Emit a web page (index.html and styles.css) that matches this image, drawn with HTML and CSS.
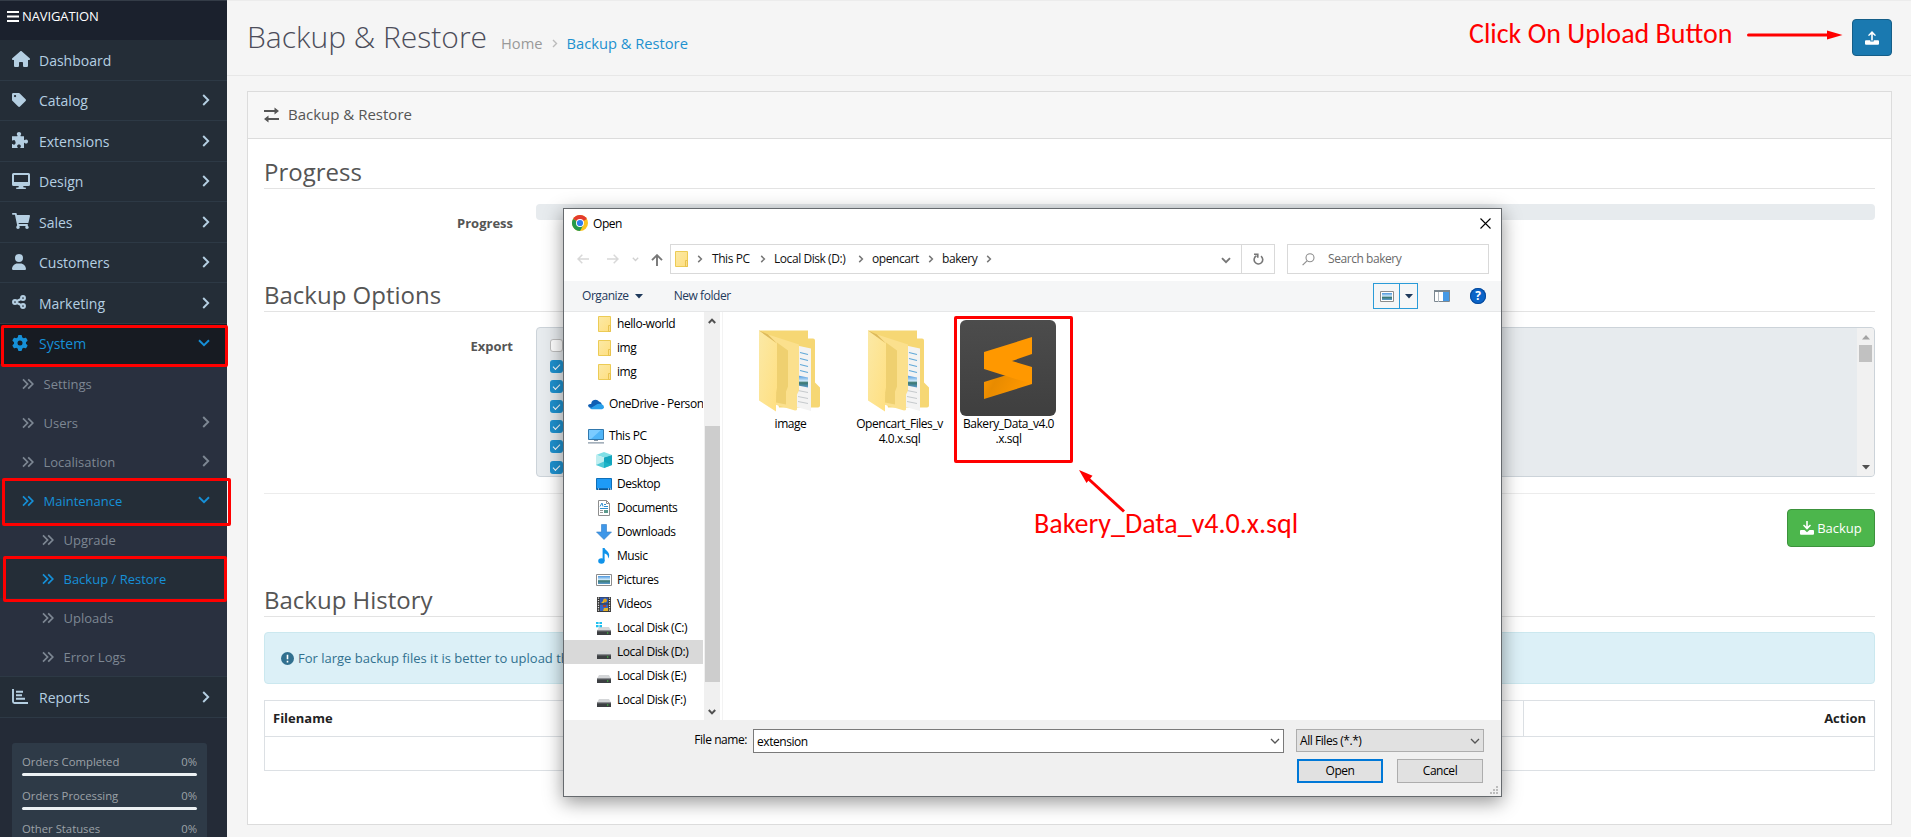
FILE: index.html
```html
<!DOCTYPE html>
<html lang="en">
<head>
<meta charset="utf-8">
<title>Backup &amp; Restore</title>
<link rel="stylesheet" href="styles.css">
</head>
<body>
<svg class="defs" width="0" height="0">
  <defs>
    <linearGradient id="gFold" x1="0" y1="0" x2="1" y2="1"><stop offset="0" stop-color="#fbe9a6"/><stop offset="1" stop-color="#ffdf80"/></linearGradient>
    <linearGradient id="gSub" x1="0" y1="0" x2="0" y2="1"><stop offset="0" stop-color="#4c4c4c"/><stop offset="1" stop-color="#3f3f3f"/></linearGradient>
    <linearGradient id="gPic" x1="0" y1="0" x2="0" y2="1"><stop offset="0" stop-color="#4a95dc"/><stop offset=".45" stop-color="#cfe9fa"/><stop offset=".6" stop-color="#38766c"/><stop offset="1" stop-color="#5b9bd0"/></linearGradient>
    <linearGradient id="gShade" x1="0" y1="0" x2="1" y2=".35"><stop offset="0" stop-color="#ff9800"/><stop offset=".35" stop-color="#e88b00"/><stop offset="1" stop-color="#ff9800"/></linearGradient>
  </defs>
  <symbol id="dbl" viewBox="0 0 12 12"><path d="M1 1.3 5.6 6 1 10.7M6.2 1.3 10.8 6 6.2 10.7" fill="none" stroke="currentColor" stroke-width="1.7"/></symbol>
  <symbol id="right" viewBox="0 0 8 12"><path d="M1.2 1 6.2 6l-5 5" fill="none" stroke="currentColor" stroke-width="1.9"/></symbol>
  <symbol id="down" viewBox="0 0 12 8"><path d="M1 1.3 6 6.2l5-4.9" fill="none" stroke="currentColor" stroke-width="1.9"/></symbol>
  <symbol id="crumb" viewBox="0 0 6 8"><path d="M1.2.9 4.400 4 1.200 7.100" fill="none" stroke="currentColor" stroke-width="1.5"/></symbol>
  <symbol id="thin" viewBox="0 0 10 6"><path d="M1 1l4 4 4-4" fill="none" stroke="currentColor" stroke-width="1.3"/></symbol>
  <symbol id="sfold" viewBox="0 0 14 16"><path d="M.5.5h12v15H.5z" fill="url(#gFold)" stroke="#eccb55"/><path d="M10.500 9.500h2v6h-2z" fill="#fbe08a" stroke="#e6c04a" stroke-width=".9"/></symbol>
  <symbol id="drive" viewBox="0 0 16 16"><path d="M3 7h10l2 3.600H1z" fill="#d4d6d8"/><path d="M1 10.500h14V15H1z" fill="#3c3f42"/><path d="M1 10.500h14v.8H1z" fill="#85898c"/><path d="M11 12.400h1.300v1.200H11z" fill="#3fe53f"/></symbol>
  <symbol id="bigfold" viewBox="0 0 61 81">
    <path d="M0 0h49v8h5q2 0 2 2v42l5 5v18q0 2-2 2H20z" fill="#f6d774"/>
    <path d="M38 15l14 3v62.500L36 76z" fill="#f3f3f3"/>
    <path d="M41 22l8 2m-8 4l8 2m-8 4l8 2m-8 4l8 2" stroke="#5fa8d8" stroke-width="1.100"/>
    <path d="M39 45l10 2v10l-10-2z" fill="url(#gPic)"/>
    <path d="M39 60l10 2m-10 4l10 2m-10 3l10 2" stroke="#c5c9cc"/>
    <path d="M9 4l31 10v46l-2 4v15q0 1-2 1L9 72z" fill="#fbe08d"/>
    <path d="M18 12l11 8v36l-2 5v13l-10-2z" fill="#efd070"/>
    <path d="M0 0l18 13v44l-1 5v19L0 70z" fill="url(#gFold)"/>
    <path d="M0 0l9 4 9 9z" fill="#dcb95c"/>
  </symbol>
</svg>

<div class="page">
  <nav class="side">
    <div class="side-title"><svg width="12" height="11" viewBox="0 0 12 11"><path d="M0 1h12M0 5.500h12M0 10h12" stroke="#fff" stroke-width="1.800"/></svg><span>NAVIGATION</span></div>
    <div class="item"><svg class="ic" width="18" height="16" viewBox="0 0 576 512"><path fill="currentColor" d="M575.800 255.500c0 18-15 32.100-32 32.100h-32l.7 160.200c0 2.700-.2 5.400-.5 8.100V472c0 22.100-17.900 40-40 40H392c-22.100 0-40-17.900-40-40V384c0-17.700-14.300-32-32-32H256c-17.700 0-32 14.300-32 32v88c0 22.100-17.900 40-40 40H104c-22.100 0-40-17.900-40-40V287.600H32c-18 0-32-14-32-32.100c0-9 3-17 10-24L266.400 8c7-7 15-8 22-8s15 2 21 7L564.800 231.500c8 7 12 15 11 24z"/></svg><span>Dashboard</span></div>
    <div class="item"><svg class="ic" width="14" height="14" viewBox="0 0 512 512"><path fill="currentColor" fill-rule="evenodd" d="M0 252.118V48C0 21.490 21.490 0 48 0h204.118a48 48 0 0 1 33.941 14.059l211.882 211.882c18.744 18.745 18.744 49.137 0 67.882L293.823 497.941c-18.745 18.744-49.137 18.744-67.882 0L14.059 286.059A48 48 0 0 1 0 252.118zM112 72c-22 0-40 18-40 40s18 40 40 40 40-18 40-40-18-40-40-40z"/></svg><span>Catalog</span><svg class="arr" width="8" height="12"><use href="#right"/></svg></div>
    <div class="item"><svg class="ic" width="16" height="16" viewBox="0 0 16 16"><path fill="currentColor" d="M0 4.200h5.200c.3 0 .4-.3.3-.6C5 3 4.800 2.400 4.800 2 4.800.8 5.800 0 7 0s2.200.8 2.200 2c0 .5-.3 1-.7 1.600-.2.3 0 .6.3.6H12v3.600c0 .3.3.5.6.3.5-.4 1-.7 1.600-.7 1.100 0 1.800.9 1.800 2.100s-.7 2.100-1.800 2.100c-.6 0-1.100-.3-1.600-.7-.3-.2-.6 0-.6.3V16H8.600c-.4 0-.5-.3-.3-.6.4-.4.6-.8.6-1.300 0-1-.9-1.600-1.900-1.600s-1.900.6-1.900 1.600c0 .5.2.9.6 1.300.2.3.1.6-.3.6H0v-3.600c0-.3.3-.5.6-.3.4.4.9.6 1.400.6 1 0 1.600-.9 1.600-1.900S3 7.900 2 7.900c-.5 0-1 .2-1.400.6-.3.2-.6 0-.6-.3z"/></svg><span>Extensions</span><svg class="arr" width="8" height="12"><use href="#right"/></svg></div>
    <div class="item"><svg class="ic" width="18" height="16" viewBox="0 0 18 16"><path fill="currentColor" fill-rule="evenodd" d="M1.500 0h15A1.500 1.500 0 0 1 18 1.500v10a1.500 1.500 0 0 1-1.500 1.500h-5.300l.4 1.500h1.600q.8 0 .8.800t-.8.700H4.800q-.8 0-.8-.7t.8-.8h1.600l.4-1.500H1.500A1.500 1.500 0 0 1 0 11.500v-10A1.500 1.500 0 0 1 1.500 0zM2 2v7h14V2z"/></svg><span>Design</span><svg class="arr" width="8" height="12"><use href="#right"/></svg></div>
    <div class="item"><svg class="ic" width="18" height="16" viewBox="0 0 576 512"><path fill="currentColor" d="M528.120 301.319l47.273-208C578.806 78.301 567.391 64 551.990 64H159.208l-9.166-44.810C147.758 8.021 137.930 0 126.529 0H24C10.745 0 0 10.745 0 24v4c0 13.255 10.745 24 24 24h69.883l70.248 343.435C150 412 136 435.222 136 456c0 30.928 25.072 56 56 56s56-25.072 56-56c0-15.674-6.447-29.835-16.824-40h209.647C430.447 426.165 424 440.326 424 456c0 30.928 25.072 56 56 56s56-25.072 56-56c0-22.172-12.888-41.332-31.579-50.405l5.517-24.276c3.413-15.018-8.002-29.319-23.403-29.319H218.117l-6.545-32h293.145c11.206 0 20.920-7.754 23.403-18.681z"/></svg><span>Sales</span><svg class="arr" width="8" height="12"><use href="#right"/></svg></div>
    <div class="item"><svg class="ic" width="14" height="16" viewBox="0 0 448 512"><path fill="currentColor" d="M224 256A128 128 0 1 0 224 0a128 128 0 1 0 0 256zm-45.700 48C79.800 304 0 383.800 0 482.300C0 498.700 13.300 512 29.700 512H418.300c16.400 0 29.700-13.300 29.700-29.700C448 383.800 368.200 304 269.700 304H178.300z"/></svg><span>Customers</span><svg class="arr" width="8" height="12"><use href="#right"/></svg></div>
    <div class="item"><svg class="ic" width="14" height="14" viewBox="0 0 14 14"><g fill="none" stroke="currentColor" stroke-width="2.100"><circle cx="3" cy="7" r="1.900"/><circle cx="11" cy="3" r="1.900"/><circle cx="11" cy="11" r="1.900"/><path d="M5 6l4-2M5 8l4 2"/></g></svg><span>Marketing</span><svg class="arr" width="8" height="12"><use href="#right"/></svg></div>
    <div class="item open"><svg class="ic" width="16" height="16" viewBox="0 0 512 512"><path fill="currentColor" fill-rule="evenodd" d="M495.900 166.600c3.200 8.700 .5 18.400-6.400 24.600l-43.300 39.400c1.100 8.300 1.700 16.800 1.700 25.400s-.6 17.100-1.700 25.400l43.300 39.400c6.900 6.200 9.600 15.900 6.400 24.600c-4.400 11.900-9.700 23.300-15.800 34.300l-4.700 8.100c-6.600 11-14 21.400-22.100 31.200c-5.900 7.200-15.700 9.600-24.500 6.800l-55.700-17.700c-13.400 10.300-28.200 18.900-44 25.400l-12.500 57.100c-2 9.100-9 16.300-18.200 17.800c-13.800 2.300-28 3.500-42.500 3.500s-28.700-1.200-42.500-3.500c-9.200-1.500-16.200-8.700-18.200-17.800l-12.500-57.100c-15.800-6.500-30.600-15.100-44-25.400L83.100 425.900c-8.800 2.800-18.600 .3-24.500-6.800c-8.100-9.800-15.500-20.200-22.100-31.200l-4.700-8.100c-6.100-11-11.400-22.400-15.800-34.300c-3.200-8.700-.5-18.400 6.400-24.600l43.300-39.400C64.600 273.100 64 264.600 64 256s.6-17.100 1.700-25.400L22.400 191.200c-6.900-6.200-9.600-15.900-6.400-24.600c4.400-11.900 9.700-23.300 15.800-34.300l4.700-8.100c6.600-11 14-21.400 22.100-31.200c5.900-7.200 15.700-9.600 24.500-6.800l55.700 17.700c13.400-10.300 28.200-18.900 44-25.400l12.500-57.100c2-9.100 9-16.300 18.200-17.800C227.300 1.200 241.500 0 256 0s28.700 1.200 42.500 3.500c9.200 1.500 16.200 8.700 18.200 17.800l12.500 57.100c15.800 6.500 30.600 15.100 44 25.400l55.700-17.700c8.800-2.800 18.600-.3 24.500 6.800c8.100 9.800 15.500 20.200 22.100 31.200l4.700 8.100c6.100 11 11.400 22.400 15.800 34.300zM256 336a80 80 0 1 0 0-160 80 80 0 1 0 0 160z"/></svg><span>System</span><svg class="arr" width="12" height="8"><use href="#down"/></svg></div>
    <div class="sub"><svg width="12" height="12"><use href="#dbl"/></svg><span>Settings</span></div>
    <div class="sub"><svg width="12" height="12"><use href="#dbl"/></svg><span>Users</span><svg class="arr" width="8" height="12"><use href="#right"/></svg></div>
    <div class="sub"><svg width="12" height="12"><use href="#dbl"/></svg><span>Localisation</span><svg class="arr" width="8" height="12"><use href="#right"/></svg></div>
    <div class="sub active"><svg width="12" height="12"><use href="#dbl"/></svg><span>Maintenance</span><svg class="arr" width="12" height="8"><use href="#down"/></svg></div>
    <div class="sub deep"><svg width="12" height="12"><use href="#dbl"/></svg><span>Upgrade</span></div>
    <div class="sub deep active"><svg width="12" height="12"><use href="#dbl"/></svg><span>Backup / Restore</span></div>
    <div class="sub deep"><svg width="12" height="12"><use href="#dbl"/></svg><span>Uploads</span></div>
    <div class="sub deep"><svg width="12" height="12"><use href="#dbl"/></svg><span>Error Logs</span></div>
    <div class="item last"><svg class="ic" width="16" height="15" viewBox="0 0 16 15"><path d="M1 0v12.500Q1 14 2.500 14H16M4 2.800h7M4 6.300h6M4 9.800h9" fill="none" stroke="currentColor" stroke-width="1.900"/></svg><span>Reports</span><svg class="arr" width="8" height="12"><use href="#right"/></svg></div>
    <div class="stats">
      <div class="stat"><div><span>Orders Completed</span><span>0%</span></div><i></i></div>
      <div class="stat"><div><span>Orders Processing</span><span>0%</span></div><i></i></div>
      <div class="stat"><div><span>Other Statuses</span><span>0%</span></div><i></i></div>
    </div>
  </nav>

  <main class="main">
    <header class="head">
      <h1>Backup &amp; Restore</h1>
      <div class="crumbs"><span>Home</span><svg width="6" height="9" viewBox="0 0 6 9"><path d="M1 1l3.500 3.500L1 8" fill="none" stroke="#bbb" stroke-width="1.400"/></svg><a>Backup &amp; Restore</a></div>
      <div class="upload"><svg width="14" height="14" viewBox="0 0 14 14"><path fill="#fff" d="M7 0l4 4.200-1 .9-2.200-1.900V9.500H6.200V3.200L4 5.100l-1-.9zM1 9.300h4.300v1.200h3.400V9.300H13q1 0 1 1v2.500q0 1-1 1H1q-1 0-1-1v-2.500q0-1 1-1z"/></svg></div>
    </header>
    <section class="panel">
      <div class="panel-head"><svg width="15" height="16" viewBox="0 0 15 16"><path d="M0 4h11M15 12H4" stroke="#555" stroke-width="2"/><path d="M10.500.6 15 4l-4.500 3.400zM4.500 8.600 0 12l4.500 3.400z" fill="#555"/></svg><span>Backup &amp; Restore</span></div>
      <div class="panel-body">
        <h2>Progress</h2>
        <div class="row r1"><label>Progress</label><div class="bar"></div></div>
        <h2>Backup Options</h2>
        <div class="row r2"><label>Export</label>
          <div class="well">
            <div class="checks"><b class="off"></b><b></b><b></b><b></b><b></b><b></b><b></b></div>
            <div class="scroll"><svg width="8" height="5"><path d="M4 0l4 4.500H0z" fill="#a3a3a3"/></svg><i></i><svg class="dn" width="8" height="5"><path d="M0 0h8L4 4.500z" fill="#505050"/></svg></div>
          </div>
        </div>
        <div class="foot"><div class="backup"><svg width="14" height="14" viewBox="0 0 14 14"><path fill="#fff" d="M6.200 0h1.600v5.500L10 3.500l1 1L7 8.800 3 4.500l1-1 2.200 2zM1 9h3.500L7 11.300 9.500 9H13q1 0 1 1v2.800q0 1-1 1H1q-1 0-1-1V10q0-1 1-1z"/></svg><span>Backup</span></div></div>
        <h2>Backup History</h2>
        <div class="alert"><svg width="13" height="13" viewBox="0 0 13 13"><circle cx="6.500" cy="6.500" r="6.500" fill="#31708f"/><path d="M6.500 2.800v4.400M6.500 8.800v1.600" stroke="#fff" stroke-width="1.600"/></svg><span>For large backup files it is better to upload the</span></div>
        <div class="table"><div class="th">Filename</div><div class="th end">Action</div><div class="td"></div></div>
      </div>
    </section>
  </main>
</div>

<div class="dialog">
  <div class="d-title">
    <svg width="16" height="16" viewBox="0 0 16 16"><circle cx="8" cy="8" r="8" fill="#fcc31e"/><path d="M8 8 1.100 4A8 8 0 0 1 14.900 4z" fill="#e33b2e"/><path d="M8 8 1.070 4A8 8 0 0 0 8 16l3.400-6z" fill="#269a4c"/><circle cx="8" cy="8" r="4" fill="#fff"/><circle cx="8" cy="8" r="3.100" fill="#2f7df0"/></svg>
    <span>Open</span>
    <svg class="close" width="11" height="11" viewBox="0 0 11 11"><path d="M.5.5l10 10M10.500.5l-10 10" stroke="#000" stroke-width="1.100"/></svg>
  </div>
  <div class="d-addr">
    <div class="navs">
      <svg width="12" height="10" viewBox="0 0 12 10"><path d="M12 5H1M5.300.8 1 5l4.300 4.200" fill="none" stroke="#d8d8d8" stroke-width="1.500"/></svg>
      <svg width="12" height="10" viewBox="0 0 12 10"><path d="M0 5h11M6.700.8 11 5 6.700 9.200" fill="none" stroke="#d8d8d8" stroke-width="1.500"/></svg>
      <svg class="mini" width="7" height="5" viewBox="0 0 7 5"><path d="M.8.8l2.700 2.700L6.200.8" fill="none" stroke="#d0d0d0" stroke-width="1.300"/></svg>
      <svg class="up" width="12" height="12" viewBox="0 0 12 12"><path d="M6 12V1.500M1 6.200l5-5 5 5" fill="none" stroke="#777" stroke-width="1.900"/></svg>
    </div>
    <div class="path">
      <svg width="14" height="16"><use href="#sfold"/></svg>
      <svg class="c c0" width="6" height="8"><use href="#crumb"/></svg><span class="w38">This PC</span>
      <svg class="c" width="6" height="8"><use href="#crumb"/></svg><span class="w75">Local Disk (D:)</span>
      <svg class="c" width="6" height="8"><use href="#crumb"/></svg><span class="w47">opencart</span>
      <svg class="c" width="6" height="8"><use href="#crumb"/></svg><span class="w35">bakery</span>
      <svg class="c" width="6" height="8"><use href="#crumb"/></svg>
      <svg class="pd" width="10" height="7" viewBox="0 0 10 7"><path d="M1 1.200l4 4 4-4" fill="none" stroke="#777" stroke-width="1.900"/></svg>
      <div class="reload"><svg width="11" height="12" viewBox="0 0 11 12"><path d="M3.500 2.800A4.300 4.300 0 1 0 8 3.200M1 1.200h3.800v3.600" fill="none" stroke="#777" stroke-width="1.600"/></svg></div>
    </div>
    <div class="search"><svg width="13" height="13" viewBox="0 0 13 13"><circle cx="8" cy="4.800" r="4" fill="none" stroke="#8f8f8f" stroke-width="1.100"/><path d="M5 7.800.6 12.200" stroke="#8f8f8f" stroke-width="1.200"/></svg><span>Search bakery</span></div>
  </div>
  <div class="d-tools">
    <span>Organize</span><svg class="tri" width="8" height="5"><path d="M0 0h8L4 4.500z" fill="#1e395b"/></svg><span class="newf">New folder</span>
    <div class="view"><div class="v1"><svg width="14" height="11" viewBox="0 0 14 11"><path d="M.5.5h13v10H.5z" fill="#fff" stroke="#8c8c8c"/><path d="M2 2h10v7H2z" fill="url(#gPic)"/></svg></div><div class="v2"><svg width="8" height="5"><path d="M0 0h8L4 4.500z" fill="#1e395b"/></svg></div></div>
    <svg class="pane" width="16" height="12" viewBox="0 0 16 12"><path d="M.5.5h15v11H.5z" fill="#fff" stroke="#7b8790"/><path d="M0 0h16v2H0z" fill="#7b8790"/><path d="M4.500 2v10" stroke="#b5bcc2"/><path d="M9 2h6v9H9z" fill="#4599e6"/></svg>
    <div class="help">?</div>
  </div>
  <div class="d-body">
    <div class="tree">
      <div class="t fo"><svg width="14" height="16"><use href="#sfold"/></svg><span>hello-world</span></div>
      <div class="t fo"><svg width="14" height="16"><use href="#sfold"/></svg><span>img</span></div>
      <div class="t fo"><svg width="14" height="16"><use href="#sfold"/></svg><span>img</span></div>
      <div class="t top gap"><svg width="16" height="16" viewBox="0 0 16 16"><path d="M3.200 8A4.300 4.300 0 0 1 11 5.500 4.500 4.500 0 0 1 14 8.500L9 12H3Q.2 11.500 0 9.500.3 7.500 3.200 8z" fill="#0f5fb4"/><path d="M2 12.500 9.500 8q4-1 6 1.500 1.300 3-1.500 3.800H4q-1.500 0-2-.8z" fill="#2aa0ea"/></svg><span>OneDrive - Person</span></div>
      <div class="t top gap"><svg width="16" height="16" viewBox="0 0 16 16"><path d="M.5 1.500h15v10H.5z" fill="#4fb4f7" stroke="#3178ad"/><path d="M1 2h12L3 11H1z" fill="#7bcbff"/><path d="M6 12h4v1H6zM0 14.300h16v1.200H0z" fill="#8796a5"/></svg><span>This PC</span></div>
      <div class="t"><svg width="16" height="16" viewBox="0 0 16 16"><path d="M0 3 8 0l8 3-8 2.500z" fill="#7fdfe6"/><path d="M0 3l8 2.500V16l-8-3z" fill="#bfeef0"/><path d="M16 3 8 5.500V16l8-3z" fill="#12a5bd"/><path d="M0 13l8-3.500L16 13l-8 3z" fill="#1fb9cc" opacity=".7"/></svg><span>3D Objects</span></div>
      <div class="t"><svg width="16" height="16" viewBox="0 0 16 16"><path d="M.5 2.500h15v11H.5z" fill="#1e9bf7" stroke="#0f6fb8"/><path d="M1 13h14" stroke="#0b4a80" stroke-width="1.200"/><path d="M2 13h1m9 0h1m1 0h1" stroke="#fff"/></svg><span>Desktop</span></div>
      <div class="t"><svg width="16" height="16" viewBox="0 0 16 16"><path d="M2.500.5h8l3 3v12h-11z" fill="#fff" stroke="#8e8e8e"/><path d="M10.500.5v3h3" fill="none" stroke="#8e8e8e"/><path d="M4 6.500 6 3l1 3.500M8 4.500h2M4 8.500h8M8 6.500h4" stroke="#2e8fd0" fill="none"/><path d="M4 10.500h3m-3 2h3" stroke="#999"/><path d="M8 10h4v3H8z" fill="#5c9a8c"/></svg><span>Documents</span></div>
      <div class="t"><svg width="16" height="16" viewBox="0 0 16 16"><path d="M5.500.5h5v7.500h5L8 15.500.5 8h5z" fill="#3f97e8" stroke="#2f7cc8" stroke-width=".6"/></svg><span>Downloads</span></div>
      <div class="t"><svg width="16" height="16" viewBox="0 0 16 16"><ellipse cx="5.400" cy="13" rx="3.200" ry="2.800" fill="#1093ea"/><path d="M6.600 0h2c.3 2.300 4.800 3.300 4.600 7.500-.1 1.400-.6 2.300-1.200 3 .4-3.200-1.200-4.300-3.400-5V13h-2z" fill="#1093ea"/></svg><span>Music</span></div>
      <div class="t"><svg width="16" height="16" viewBox="0 0 16 16"><path d="M.5 2.500h15v11H.5z" fill="#fff" stroke="#8c8c8c"/><path d="M2 4h12v8H2z" fill="url(#gPic)"/></svg><span>Pictures</span></div>
      <div class="t"><svg width="16" height="16" viewBox="0 0 16 16"><path d="M1 1h14v15H1z" fill="#3b3b3b"/><path d="M2.500 1.500v14M13.500 1.500v14" stroke="#e4e4e4" stroke-width="1.200" stroke-dasharray="1.200 1.200"/><path d="M4 1.500h8v6H4z" fill="#2b59b8"/><path d="M4 8.500h8v6.500H4z" fill="#3566c4"/><circle cx="9" cy="4.500" r="2" fill="#e0a21e"/><path d="M5 7l3-3v3zM8 12h4v3H7z" fill="#e2b02b"/><path d="M7 9h3v2H7z" fill="#b0402a"/></svg><span>Videos</span></div>
      <div class="t"><svg width="16" height="16" viewBox="0 0 16 16"><use href="#drive"/><path d="M0 2h2.600v2H0zm3.400 0H6v2H3.400zM0 5h2.600v2.200H0zm3.400 0H6v2.200H3.400z" fill="#1fc0ef"/></svg><span>Local Disk (C:)</span></div>
      <div class="t sel"><svg width="16" height="16"><use href="#drive"/></svg><span>Local Disk (D:)</span></div>
      <div class="t"><svg width="16" height="16"><use href="#drive"/></svg><span>Local Disk (E:)</span></div>
      <div class="t"><svg width="16" height="16"><use href="#drive"/></svg><span>Local Disk (F:)</span></div>
    </div>
    <div class="tscroll"><svg width="8" height="6" viewBox="0 0 8 6"><path d="M.8 5 4 1.600 7.200 5" fill="none" stroke="#505050" stroke-width="2"/></svg><i></i><svg class="dn" width="8" height="6" viewBox="0 0 8 6"><path d="M.8 1 4 4.400 7.200 1" fill="none" stroke="#505050" stroke-width="2"/></svg></div>
    <div class="files">
      <div class="file"><svg width="61" height="82"><use href="#bigfold"/></svg><p>image</p></div>
      <div class="file"><svg width="61" height="82"><use href="#bigfold"/></svg><p>Opencart_Files_v<br>4.0.x.sql</p></div>
      <div class="file subl"><svg width="96" height="96" viewBox="0 0 96 96"><rect width="96" height="96" rx="6" fill="url(#gSub)"/><path d="M24 62 72 47v17L24 79z" fill="url(#gShade)"/><path d="M24 32 72 17v17L52 41l20 6v17L24 49z" fill="#ff9800"/></svg><p>Bakery_Data_v4.0<br>.x.sql</p></div>
    </div>
  </div>
  <div class="d-foot">
    <div class="frow"><span class="fl">File name:</span><div class="inp"><span>extension</span><svg width="10" height="6"><use href="#thin"/></svg></div><div class="selc"><span>All Files (*.*)</span><svg width="10" height="6"><use href="#thin"/></svg></div></div>
    <div class="brow"><div class="btn prim">Open</div><div class="btn">Cancel</div></div>
    <svg class="grip" width="8" height="8"><path d="M6 0h2v2H6zM3 3h2v2H3zM6 3h2v2H6zM0 6h2v2H0zM3 6h2v2H3zM6 6h2v2H6z" fill="#bcbcbc"/></svg>
  </div>
</div>

<div class="mark m-system"></div>
<div class="mark m-maint"></div>
<div class="mark m-backup"></div>
<div class="mark m-file"></div>
<div class="note n-upload">Click On Upload Button</div>
<div class="note n-file">Bakery_Data_v4.0.x.sql</div>
<svg class="arrow a-upload" width="96" height="10"><path d="M1.500 5H82" stroke="#f00" stroke-width="3" stroke-linecap="round"/><path d="M95.500 5 80 9.500v-9z" fill="#f00"/></svg>
<svg class="arrow a-file" width="48" height="44"><path d="M45 41.500 8 7.500" stroke="#f00" stroke-width="3"/><path d="M0 0 13.500 5.800 7.500 13z" fill="#f00"/></svg>
</body>
</html>
```
FILE: styles.css
```css
* { box-sizing: border-box; }
body { margin: 0; width: 1911px; height: 837px; overflow: hidden; position: relative; background: #f5f5f5; font-family: "Open Sans", sans-serif; color: #555; }
svg { display: block; flex: none; }
.defs { position: absolute; }
h1, h2, p { margin: 0; font-weight: 400; }
.page { display: flex; height: 837px; overflow: hidden; }

/* Sidebar */
.side { width: 227px; flex: none; background: #242b37; border-top: 1px solid #343c47; }
.side-title { height: 39px; background: #1b212d; color: #fff; font-size: 13px; line-height: 18px; display: flex; align-items: flex-start; gap: 3px; padding: 6px 0 0 7px; letter-spacing: -.1px; }
.side-title svg { margin-top: 4px; }
.item { height: 40.5px; background: #242d37; border-bottom: 1px solid #2d3945; display: grid; grid-template-columns: 27px 1fr auto; align-items: center; color: #b5cfe2; font-size: 14px; padding: 1px 17px 0 12px; }
.ic { margin-bottom: 2px; }
.arr { margin-bottom: 1px; }
.open { background: #171b22; color: #1690d8; border-color: #171b22; }
.sub { height: 39px; background: #29303f; color: #7d8793; font-size: 13px; display: grid; grid-template-columns: 21.5px 1fr auto; align-items: center; padding: 0 17px 0 22px; }
.deep { padding-left: 42px; }
.active { background: #242d37; color: #1690d8; }
.last { border-top: 1px solid #2d3945; height: 42px; }
.stats { margin: 25px 20px 0 12px; height: 110px; border-radius: 3px; background: #2e3a47; padding: 10px 10px 0; }
.stat { height: 33.5px; font-size: 11.3px; line-height: 17px; color: #9da2a8; }
.stat div { display: flex; justify-content: space-between; }
.stat i { display: block; height: 3px; margin-top: 3px; border-radius: 2px; background: #edf1f4; }

/* Main */
.main { flex: 1; border-top: 1px solid #ececec; }
.head { height: 75px; border-bottom: 1px solid #e7e7e7; display: flex; align-items: flex-start; padding: 0 19px 0 20px; }
h1 { font-size: 30px; font-weight: 300; color: #4c4d5a; line-height: 40px; margin-top: 16px; width: 254px; white-space: nowrap; }
.crumbs { display: flex; align-items: center; gap: 9px; font-size: 14.7px; line-height: 20px; margin-top: 32px; color: #999; }
.crumbs a { color: #1e91cf; }
.upload { margin: 18px 0 0 auto; width: 40px; height: 37px; border: 1px solid #155e88; border-radius: 4px; background: #1a79b0; display: flex; align-items: center; justify-content: center; }
.panel { margin: 15px 19px 0 20px; height: 734px; border: 1px solid #dcdcdc; background: #fff; }
.panel-head { height: 47px; background: #f7f7f7; border-bottom: 1px solid #dcdcdc; display: flex; align-items: center; gap: 9px; padding-left: 16px; font-size: 15px; }
.panel-head span { padding-bottom: 2px; }
.panel-body { padding: 16px; }
h2 { font-size: 24px; line-height: 34px; height: 34px; border-bottom: 1px solid #e3e3e3; }
.row { display: grid; grid-template-columns: 249px 1fr; column-gap: 23px; padding-top: 15px; font-size: 13px; }
.row label { text-align: right; font-weight: 700; line-height: 18px; padding-top: 10px; }
.r1 { height: 89px; }
.bar { height: 16px; border-radius: 4px; background: #e7ebee; }
.r2 { height: 182px; border-bottom: 1px solid #ececec; }
.well { height: 150px; border: 1px solid #ccd3d9; border-radius: 4px; background: #e7ebee; display: flex; justify-content: space-between; overflow: hidden; padding-left: 13px; }
.checks { display: flex; flex-direction: column; gap: 7px; padding-top: 11px; }
.checks b { width: 13px; height: 13px; flex: none; border-radius: 3px; background: #1e91cf; display: flex; align-items: center; justify-content: center; }
.checks b::after { content: ""; width: 6px; height: 3px; border: solid #fff; border-width: 0 0 1.5px 1.5px; transform: translateY(-1px) rotate(-45deg); }
.checks .off { background: #fff; border: 1px solid #bfbfbf; margin-bottom: 1px; }
.checks .off::after { display: none; }
.checks b:last-child { margin-top: 1px; }
.scroll { width: 17px; background: #f1f1f1; display: flex; flex-direction: column; align-items: center; padding: 7px 0 6px; }
.scroll i { width: 13px; height: 17px; background: #c1c1c1; margin-top: 5px; }
.dn { margin-top: auto; }
.foot { height: 89px; display: flex; justify-content: flex-end; padding-top: 15px; }
.backup { width: 88px; height: 38px; background: #4cb64c; border: 1px solid #3c923c; border-radius: 4px; color: #fff; font-size: 13px; display: flex; align-items: center; justify-content: center; gap: 3px; }
.alert { margin-top: 15px; height: 52px; border: 1px solid #cbe8ef; border-radius: 4px; background: #dcf0f7; color: #31708f; font-size: 13px; display: flex; align-items: center; gap: 4px; padding-left: 16px; white-space: nowrap; }
.table { margin-top: 16px; display: grid; grid-template-columns: 1259px 1fr; border: 1px solid #dce0e4; height: 71px; grid-template-rows: 36px 1fr; }
.th { font-size: 13px; font-weight: 700; color: #222; padding: 0 8px; line-height: 34px; border-bottom: 1px solid #dce0e4; border-right: 1px solid #dce0e4; }
.end { text-align: right; border-right: 0; }
.td { grid-column: 1 / 3; }

/* File dialog */
.dialog { position: absolute; left: 563px; top: 208px; width: 939px; height: 589px; background: #fff; border: 1px solid #666a6e; box-shadow: 0 5px 18px rgba(0,0,0,.42); color: #000; font-size: 12px; letter-spacing: -.44px; display: flex; flex-direction: column; }
.dialog span, .dialog p { white-space: nowrap; }
.d-title { height: 35px; display: flex; align-items: flex-start; padding: 6px 10px 0 8px; gap: 5px; line-height: 17px; }
.close { margin: 3px 0 0 auto; }
.d-addr { height: 37px; display: flex; }
.navs { width: 106px; display: flex; align-items: center; gap: 18px; height: 30px; padding-left: 13px; }
.mini { margin: 0 -7px 0 -5px; }
.up { margin: 2px 0 0 1px; }
.path { width: 605px; height: 30px; border: 1px solid #d9d9d9; display: flex; align-items: center; padding-left: 4px; color: #111; }
.path span, .search span, .d-tools span, .t span { padding-bottom: 2px; }
.c { color: #777; margin: 0 8.5px; }
.c0 { margin: 0 9px 0 8px; }
.w38 { width: 39px; }
.w75 { width: 75px; }
.w47 { width: 47px; }
.w35 { width: 35px; }
.pd { margin: 2px 10px 0 auto; }
.reload { width: 33px; height: 28px; border-left: 1px solid #d9d9d9; display: flex; align-items: center; justify-content: center; }
.search { margin-left: 12px; width: 202px; height: 30px; border: 1px solid #d9d9d9; display: flex; align-items: center; gap: 13px; padding-left: 14px; color: #6a6a6a; }
.d-tools { height: 31px; background: #f5f6f7; border-bottom: 1px solid #e6e7e8; display: flex; align-items: center; padding: 0 15px 0 18px; color: #1e395b; }
.tri { margin-left: 6px; }
.newf { margin-left: 31px; }
.view { margin-left: auto; display: flex; width: 45px; height: 26px; border: 1px solid #2a9bd8; }
.v1, .v2 { display: flex; align-items: center; justify-content: center; }
.v1 { width: 26px; border-right: 1px solid #2a9bd8; }
.v2 { flex: 1; }
.pane { margin: 0 20px 0 16px; }
.help { width: 16px; height: 16px; border-radius: 50%; background: #0a64c8; box-shadow: inset 0 0 0 1px #08499a; color: #fff; font-weight: 700; text-align: center; line-height: 16px; font-size: 12px; }
.d-body { height: 408px; display: flex; }
.tree { width: 139px; overflow: hidden; }
.t { height: 24px; display: flex; align-items: center; padding-left: 32px; gap: 5px; }
.fo { padding-left: 34px; }
.top { padding-left: 24px; }
.gap { margin-top: 8px; }
.sel { background: #d9d9d9; }
.tscroll { width: 16px; margin-left: 1px; background: #f0f0f0; display: flex; flex-direction: column; align-items: center; padding: 6px 0 5px; }
.tscroll i { width: 15px; height: 256px; background: #cdcdcd; margin-top: 102px; }
.files { flex: 1; margin-left: 2px; border-left: 1px solid #f3f3f3; display: flex; padding-left: 13px; }
.file { width: 109px; display: flex; flex-direction: column; align-items: center; padding-top: 18px; text-align: center; line-height: 15px; }
.file svg { margin-right: 2px; }
.file p { margin-top: 4px; }
.subl { padding-top: 8px; }
.subl p { margin-top: 0; }
.d-foot { flex: 1; background: #f0f0f0; position: relative; padding-top: 9px; }
.frow { display: flex; }
.fl { width: 183px; text-align: right; line-height: 22px; }
.inp { margin-left: 6px; width: 531px; height: 24px; border: 1px solid #7a7a7a; background: #fff; display: flex; justify-content: space-between; align-items: center; padding: 0 3px; color: #000; }
.selc { margin-left: 12px; width: 188px; height: 23px; border: 1px solid #adadad; background: #e1e1e1; display: flex; justify-content: space-between; align-items: center; padding: 0 3px; }
.frow svg { color: #555; }
.brow { display: flex; gap: 14px; padding-left: 733px; margin-top: 6px; }
.btn { width: 86px; height: 24px; background: #e1e1e1; border: 1px solid #adadad; text-align: center; line-height: 22px; }
.prim { border: 2px solid #0078d7; line-height: 20px; }
.grip { position: absolute; right: 3px; bottom: 2px; }

/* Callouts */
.mark { position: absolute; border: 3px solid #f00; border-radius: 2px; }
.m-system { left: 1px; top: 325px; width: 227px; height: 42px; }
.m-maint { left: 2px; top: 478px; width: 229px; height: 48px; }
.m-backup { left: 3px; top: 556px; width: 224px; height: 46px; }
.m-file { left: 954px; top: 316px; width: 119px; height: 147px; }
.note { position: absolute; color: #f00; font-family: Carlito, "Open Sans", sans-serif; font-size: 28px; line-height: 34px; white-space: nowrap; }
.n-upload { left: 1469px; top: 17px; }
.n-file { left: 1034px; top: 507px; }
.arrow { position: absolute; }
.a-upload { left: 1747px; top: 30px; }
.a-file { left: 1079px; top: 470px; }
```
